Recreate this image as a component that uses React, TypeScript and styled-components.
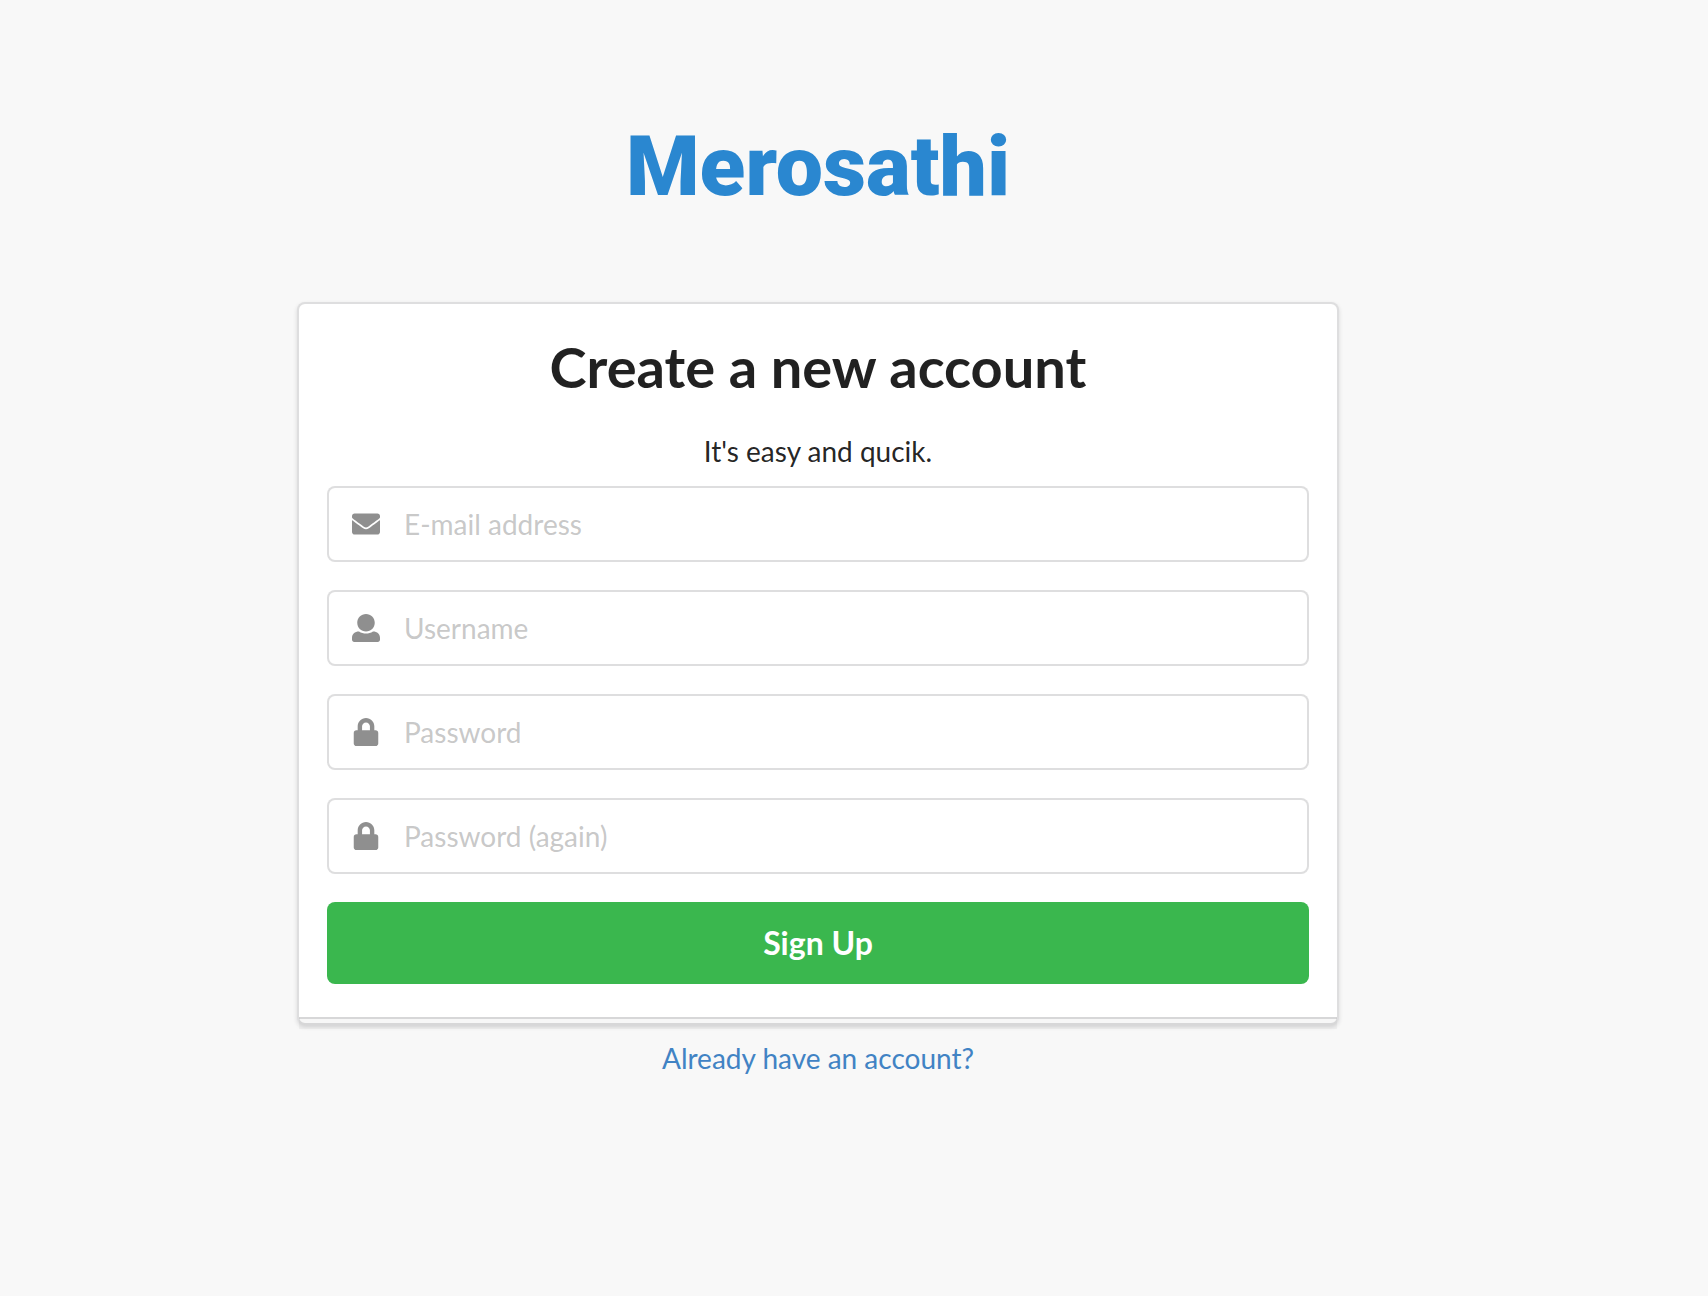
import React from "react";
import styled, { createGlobalStyle } from "styled-components";
import { FaEnvelope, FaLock } from "react-icons/fa";

const GlobalStyle = createGlobalStyle`
  *, *::before, *::after {
    box-sizing: border-box;
  }
  body {
    margin: 0;
    background: #f8f8f8;
    color: rgba(0, 0, 0, 0.87);
    font-family: Lato, "Liberation Sans", sans-serif;
    font-size: 28px;
    line-height: 40px;
  }
`;

const Page = styled.main`
  display: flex;
  flex-direction: column;
  align-items: center;
  min-height: 100vh;
  padding: 113px 100px 56px 28px;
`;

const Column = styled.div`
  display: flex;
  flex-direction: column;
  width: 100%;
  max-width: 1042px;
  text-align: center;
`;

const Brand = styled.h1`
  margin: 0 0 81px;
  color: #2a87d0;
  font-family: Roboto, "Liberation Sans", sans-serif;
  font-size: 84px;
  font-weight: 900;
  line-height: 108px;
`;

const Card = styled.section`
  position: relative;
  padding: 27px 28px 39px;
  background: #fff;
  border: 2px solid rgba(34, 36, 38, 0.15);
  border-radius: 8px;
  box-shadow: 0 2px 4px rgba(34, 36, 38, 0.15);

  &::after {
    content: "";
    position: absolute;
    left: 0;
    bottom: -6px;
    width: 100%;
    height: 12px;
    border-top: 2px solid rgba(34, 36, 38, 0.15);
    background: rgba(0, 0, 0, 0.03);
  }
`;

const Title = styled.h2`
  margin: 0 0 28px;
  font-size: 56px;
  font-weight: 700;
  line-height: 72px;
`;

const Tagline = styled.p`
  margin: 0 0 15px;
`;

const Form = styled.form`
  display: flex;
  flex-direction: column;
  gap: 28px;
`;

const Field = styled.div`
  display: flex;
  height: 76px;
  background: #fff;
  border: 2px solid rgba(34, 36, 38, 0.15);
  border-radius: 8px;

  &:focus-within {
    border-color: #85b7d9;
  }
`;

const FieldIcon = styled.label`
  display: flex;
  flex: 0 0 74px;
  align-items: center;
  justify-content: center;
  padding-bottom: 1px;
  opacity: 0.5;
`;

const TextInput = styled.input`
  flex: 1;
  min-width: 0;
  padding: 0 28px 0 1px;
  border: 0;
  outline: 0;
  background: transparent;
  color: inherit;
  font: inherit;

  &::placeholder {
    color: rgba(191, 191, 191, 0.87);
    opacity: 1;
  }
`;

const SubmitButton = styled.button`
  height: 82px;
  padding: 0 48px;
  border: 0;
  border-radius: 8px;
  background: #3ab74e;
  color: #fff;
  font-family: inherit;
  font-size: 32px;
  font-weight: 700;
  line-height: 32px;
  cursor: pointer;
`;

const SignInLink = styled.a`
  align-self: center;
  margin-top: 13px;
  color: #4183c4;
  text-decoration: none;
`;

const UserIcon = () => (
  <svg width="28" height="28" viewBox="0 0 512 512" fill="currentColor" aria-hidden="true">
    <path d="M256 0c88.366 0 160 71.634 160 160S344.366 320 256 320 96 248.366 96 160 167.634 0 256 0zM384 320c-78 50-178 50-256 0C50 320 0 370 0 434V472c0 22 18 40 40 40h432c22 0 40-18 40-40v-38c0-64-50-114-128-114z" />
  </svg>
);

const fields = [
  { id: "email", type: "email", label: "E-mail address", icon: <FaEnvelope size={28} /> },
  { id: "username", type: "text", label: "Username", icon: <UserIcon /> },
  { id: "password", type: "password", label: "Password", icon: <FaLock size={28} /> },
  { id: "password-again", type: "password", label: "Password (again)", icon: <FaLock size={28} /> },
];

export default function App() {
  return (
    <>
      <GlobalStyle />
      <Page>
        <Column>
          <Brand>Merosathi</Brand>
          <Card>
            <Title>Create a new account</Title>
            <Tagline>It's easy and qucik.</Tagline>
            <Form onSubmit={(event) => event.preventDefault()}>
              {fields.map(({ id, type, label, icon }) => (
                <Field key={id}>
                  <FieldIcon htmlFor={id}>{icon}</FieldIcon>
                  <TextInput id={id} name={id} type={type} placeholder={label} aria-label={label} />
                </Field>
              ))}
              <SubmitButton type="submit">Sign Up</SubmitButton>
            </Form>
          </Card>
          <SignInLink href="#login">Already have an account?</SignInLink>
        </Column>
      </Page>
    </>
  );
}
